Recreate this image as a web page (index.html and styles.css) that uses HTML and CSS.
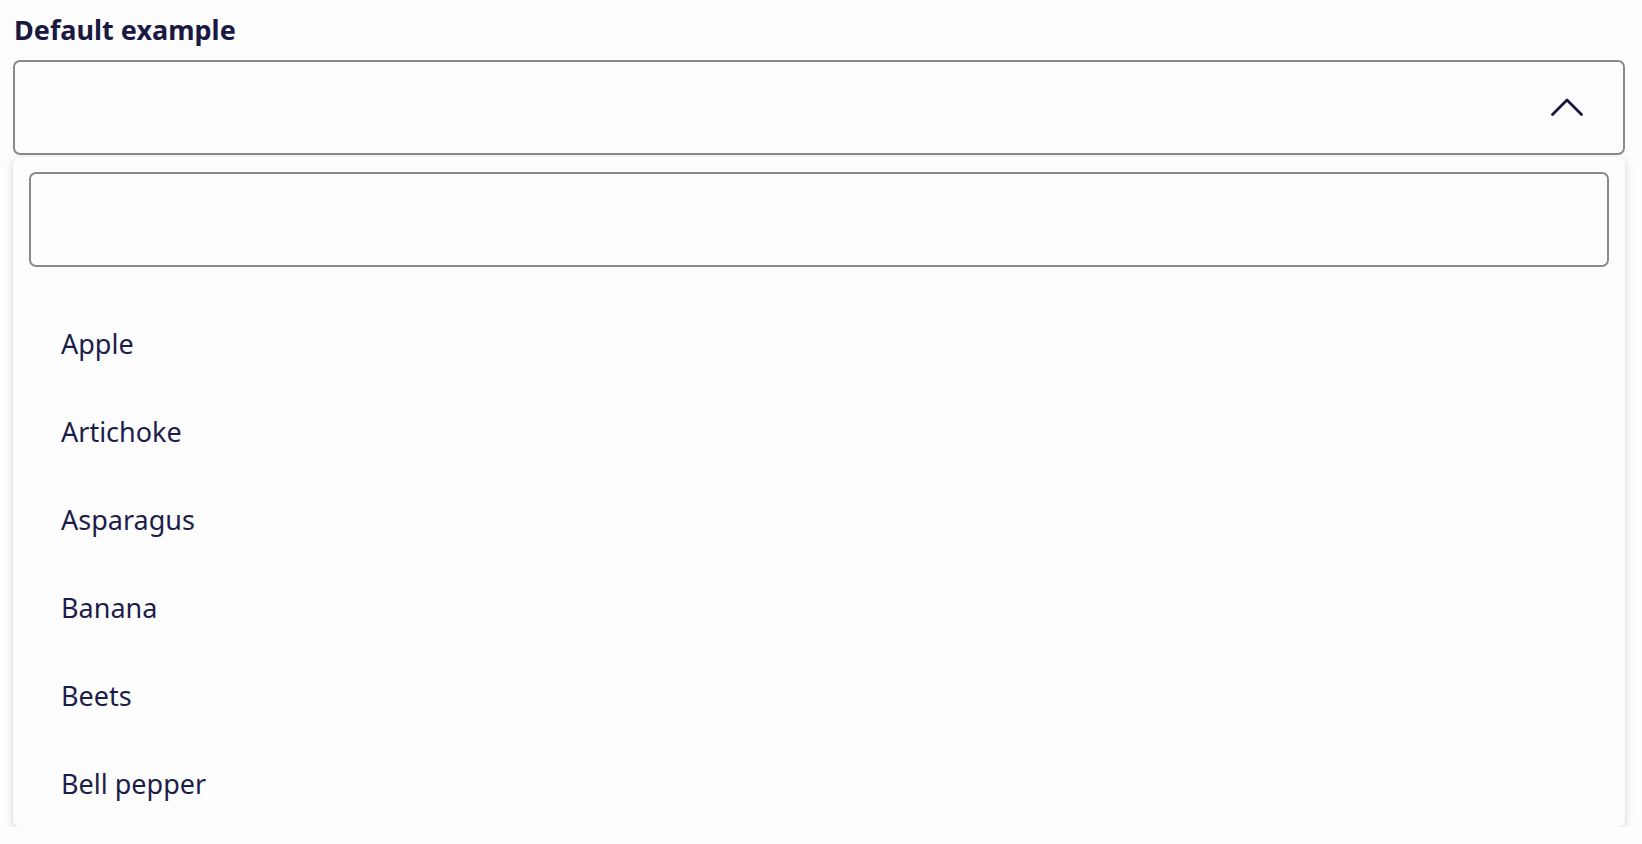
FILE: index.html
```html
<!DOCTYPE html>
<html lang="en">
<head>
<meta charset="utf-8">
<title>Default example</title>
<link rel="stylesheet" href="styles.css">
</head>
<body>
<div class="page">
  <label class="label" for="combo">Default example</label>
  <div class="combo">
    <button class="select" id="combo" type="button" aria-expanded="true">
      <span class="select-value"></span>
      <svg class="chevron" width="32" height="18" viewBox="0 0 32 18" aria-hidden="true">
        <path d="M1.5 16.5 L16 2 L30.5 16.5" fill="none" stroke="currentColor" stroke-width="2.8" stroke-linecap="round" stroke-linejoin="round"/>
      </svg>
    </button>
    <div class="panel">
      <div class="search-wrap">
        <input class="search" type="text" aria-label="Search">
      </div>
      <ul class="options">
        <li class="option">Apple</li>
        <li class="option">Artichoke</li>
        <li class="option">Asparagus</li>
        <li class="option">Banana</li>
        <li class="option">Beets</li>
        <li class="option">Bell pepper</li>
      </ul>
    </div>
  </div>
</div>
</body>
</html>
```

FILE: styles.css
```css
* { box-sizing: border-box; }
html, body {
  margin: 0;
  padding: 0;
  background: #fdfdfd;
}
body {
  font-family: "Noto Sans", "Open Sans", sans-serif;
  color: #1d1d4b;
}
.page {
  padding: 14px 17px 0 13px;
  display: flex;
  flex-direction: column;
}
.label {
  font-size: 27px;
  line-height: 32px;
  font-weight: 700;
  color: #191943;
  padding-left: 1px;
}
.combo {
  margin-top: 14px;
  display: flex;
  flex-direction: column;
}
.select {
  height: 95px;
  width: 100%;
  background: #fdfdfd;
  border: 2px solid #8a8a8a;
  border-radius: 7px;
  display: flex;
  align-items: center;
  justify-content: space-between;
  padding: 0 40px 0 16px;
  color: #15153d;
  font: inherit;
}
.chevron {
  display: block;
  margin-top: -2px;
}
.panel {
  margin-top: 2px;
  background: #fdfdfd;
  border-radius: 7px;
  box-shadow: 0 3px 10px rgba(0, 0, 0, 0.15), 0 0 3px rgba(0, 0, 0, 0.05);
  display: flex;
  flex-direction: column;
}
.search-wrap {
  padding: 15px 16px 0 16px;
}
.search {
  display: block;
  width: 100%;
  height: 95px;
  border: 2px solid #8a8a8a;
  border-radius: 7px;
  background: #fdfdfd;
  font: inherit;
  padding: 0 16px;
}
.options {
  list-style: none;
  margin: 32px 0 0 0;
  padding: 0;
}
.option {
  height: 88px;
  display: flex;
  align-items: center;
  padding-left: 48px;
  font-size: 27px;
  color: #1d1d4b;
}
```
